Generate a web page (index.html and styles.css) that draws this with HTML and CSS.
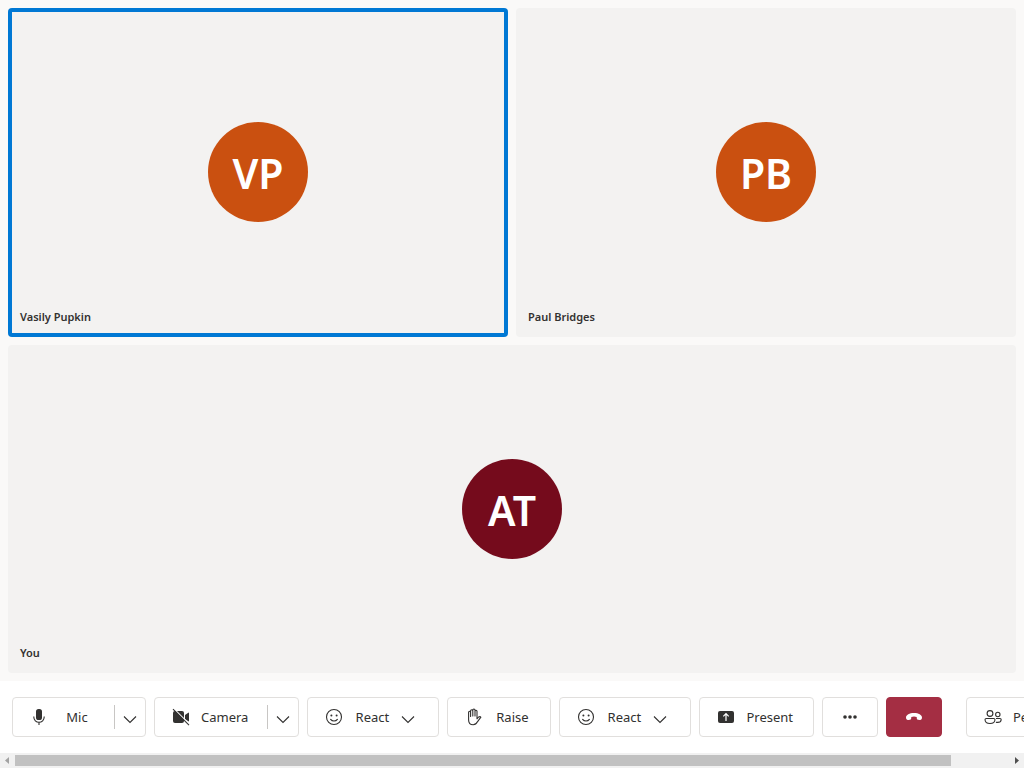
FILE: index.html
```html
<!DOCTYPE html>
<html lang="en">
<head>
<meta charset="utf-8">
<meta name="viewport" content="width=device-width, initial-scale=1">
<title>Call</title>
<link rel="stylesheet" href="styles.css">
</head>
<body>
<svg class="sprite" aria-hidden="true">
  <symbol id="chevron" viewBox="0 0 20 20"><path d="M4 9.500l6 6 6-6" fill="none" stroke="currentColor" stroke-width="1.1"/></symbol>
  <symbol id="smile" viewBox="0 0 20 20"><circle cx="10" cy="10" r="7.5" fill="none" stroke="currentColor" stroke-width="1.1"/><circle cx="7.4" cy="8.4" r="1" fill="currentColor"/><circle cx="12.6" cy="8.4" r="1" fill="currentColor"/><path d="M6.6 12.4a4.3 4.3 0 0 0 6.8 0" fill="none" stroke="currentColor" stroke-width="1.1" stroke-linecap="round"/></symbol>
</svg>
<main class="gallery">
  <section class="tile tile-speaking">
    <div class="avatar">VP</div>
    <div class="name">Vasily Pupkin</div>
  </section>
  <section class="tile">
    <div class="avatar">PB</div>
    <div class="name">Paul Bridges</div>
  </section>
  <section class="tile tile-wide">
    <div class="avatar avatar-self">AT</div>
    <div class="name">You</div>
  </section>
</main>
<div class="controls">
  <div class="split">
    <button class="btn">
      <svg class="icon" viewBox="0 0 20 20"><rect x="7" y="2" width="6" height="11" rx="2.6" fill="currentColor"/><path d="M4.8 9.5v.6a5.2 5.2 0 0 0 10.4 0v-.6M10 15.3V18" fill="none" stroke="currentColor" stroke-width="1.1"/></svg>
      <span class="label">Mic</span>
    </button>
    <button class="drop" aria-label="Mic options"><svg class="icon"><use href="#chevron"/></svg></button>
  </div>
  <div class="split">
    <button class="btn">
      <svg class="icon" viewBox="0 0 20 20"><rect x="2" y="4" width="11" height="12" rx="2" fill="currentColor"/><path d="M14 8l3.3-2.3q.7-.3.7.5v7.6q0 .8-.7.5L14 12z" fill="currentColor"/><path d="M2.8 1.6l15.8 15.8" stroke="#fff" stroke-width="1.2"/><path d="M2 2.2l16 16" stroke="currentColor" stroke-width="1.1"/></svg>
      <span class="label">Camera</span>
    </button>
    <button class="drop" aria-label="Camera options"><svg class="icon"><use href="#chevron"/></svg></button>
  </div>
  <button class="btn btn-box"><svg class="icon"><use href="#smile"/></svg><span class="label">React</span><svg class="icon caret"><use href="#chevron"/></svg></button>
  <button class="btn btn-box">
    <svg class="icon" viewBox="0 0 20 20"><path d="M4.6 11V5.2q0-1 1-1t1 1V9.500V3.700q0-1 1.100-1t1.100 1V9V3q0-1 1.100-1t1.100 1V9V4.200q0-1 1-1t1 1V11.800L14.600 10q1.600-.8 2.300.2L13.600 14.600Q12 17.800 9.200 17.800Q4.600 17.800 4.600 13z" fill="none" stroke="currentColor" stroke-width="1.100" stroke-linejoin="round"/></svg>
    <span class="label">Raise</span>
  </button>
  <button class="btn btn-box"><svg class="icon"><use href="#smile"/></svg><span class="label">React</span><svg class="icon caret"><use href="#chevron"/></svg></button>
  <button class="btn btn-box">
    <svg class="icon" viewBox="0 0 20 20"><rect x="2" y="4" width="16" height="12" rx="2" fill="currentColor"/><path d="M10 14V7M7.300 9.400L10 6.700l2.700 2.700" fill="none" stroke="#fff" stroke-width="1.200"/></svg>
    <span class="label">Present</span>
  </button>
  <button class="btn btn-box btn-icon" aria-label="More"><svg class="icon" viewBox="0 0 20 20" fill="currentColor"><circle cx="5" cy="10" r="1.800"/><circle cx="10" cy="10" r="1.800"/><circle cx="15" cy="10" r="1.800"/></svg></button>
  <button class="btn btn-box btn-icon btn-end" aria-label="Leave"><svg class="icon" viewBox="0 0 20 20"><path d="M10 6C5.500 6 2 7.800 2 10.600c0 1.800.9 2.600 2.300 2.400l1.700-.3c.9-.2 1.200-.7 1.200-1.500l.1-1.200c1.700-.7 3.700-.7 5.400 0l.1 1.200c0 .8.300 1.300 1.200 1.500l1.700.3c1.400.2 2.300-.6 2.300-2.400C18 7.800 14.500 6 10 6z" fill="currentColor"/></svg></button>
  <button class="btn btn-box btn-side">
    <svg class="icon" viewBox="0 0 20 20" fill="none" stroke="currentColor" stroke-width="1.100"><circle cx="7" cy="6.500" r="2.900"/><circle cx="14.800" cy="7.500" r="2.200"/><path d="M3.300 11.500h7.400q1.300 0 1.300 1.300Q11.700 16.500 7 16.500T2 12.800q0-1.300 1.300-1.300zM13 11.500h4q1.200 0 1.200 1.200Q17.900 15.400 14.600 15.400q-1 0-1.700-.2"/></svg>
    <span class="label">People</span>
  </button>
</div>
<div class="scrollbar" aria-hidden="true">
  <svg class="arrow arrow-off" viewBox="0 0 15 15"><path d="M9 4v7L5 7.500z" fill="currentColor"/></svg>
  <div class="track"><div class="thumb"></div></div>
  <svg class="arrow" viewBox="0 0 15 15"><path d="M6 4v7l4-3.500z" fill="currentColor"/></svg>
</div>
</body>
</html>
```
FILE: styles.css
```css
* { box-sizing: border-box; }
body {
  margin: 0;
  min-height: 100vh;
  display: flex;
  flex-direction: column;
  overflow-x: hidden;
  background: #faf9f8;
  color: #323130;
  font: 13px/20px "Noto Sans", "Open Sans", sans-serif;
}
.sprite { display: none; }
.gallery {
  flex: 1;
  display: grid;
  grid-template-columns: 1fr 1fr;
  grid-template-rows: 1fr 1fr;
  gap: 8px;
  padding: 8px;
}
.tile {
  position: relative;
  display: flex;
  align-items: center;
  justify-content: center;
  background: #f3f2f1;
  border-radius: 4px;
}
.tile-speaking { box-shadow: inset 0 0 0 4px #0078d4; }
.tile-wide { grid-column: 1 / -1; }
.avatar {
  width: 100px;
  height: 100px;
  border-radius: 50%;
  background: #ca5010;
  color: #fff;
  font-size: 41px;
  font-weight: 600;
  line-height: 103px;
  text-align: center;
}
.avatar-self { background: #750b1c; }
.name {
  position: absolute;
  left: 12px;
  bottom: 12px;
  font-size: 11px;
  line-height: 16px;
  font-weight: 600;
}
.controls {
  display: flex;
  gap: 8px;
  padding: 16px 12px;
  background: #fff;
  overflow: hidden;
}
button {
  margin: 0;
  border: 0;
  background: none;
  color: inherit;
  font: inherit;
}
.split, .btn-box {
  flex: none;
  height: 40px;
  border: 1px solid #e1dfdd;
  border-radius: 4px;
}
.split { display: flex; align-items: center; }
.btn {
  display: flex;
  align-items: center;
  padding: 0 19px 0 16px;
}
.btn-box { padding-right: 20px; }
.icon { flex: none; width: 20px; height: 20px; display: block; }
.label { min-width: 36px; margin-left: 10px; text-align: center; }
.caret { margin-left: 8px; }
.drop {
  height: 24px;
  padding: 0 5px;
  border-left: 1px solid #c8c6c4;
}
.btn-icon { width: 56px; padding: 0; justify-content: center; }
.btn-end { background: #a42e43; border-color: #a42e43; color: #fff; }
.btn-side { margin-left: 16px; }
.scrollbar { display: flex; height: 15px; background: #f1f1f1; }
.arrow { flex: none; width: 15px; height: 15px; color: #505050; }
.arrow-off { color: #a3a3a3; }
.track { flex: 1; padding: 2px 0; }
.thumb { width: 94.2%; height: 11px; background: #c1c1c1; }
```
